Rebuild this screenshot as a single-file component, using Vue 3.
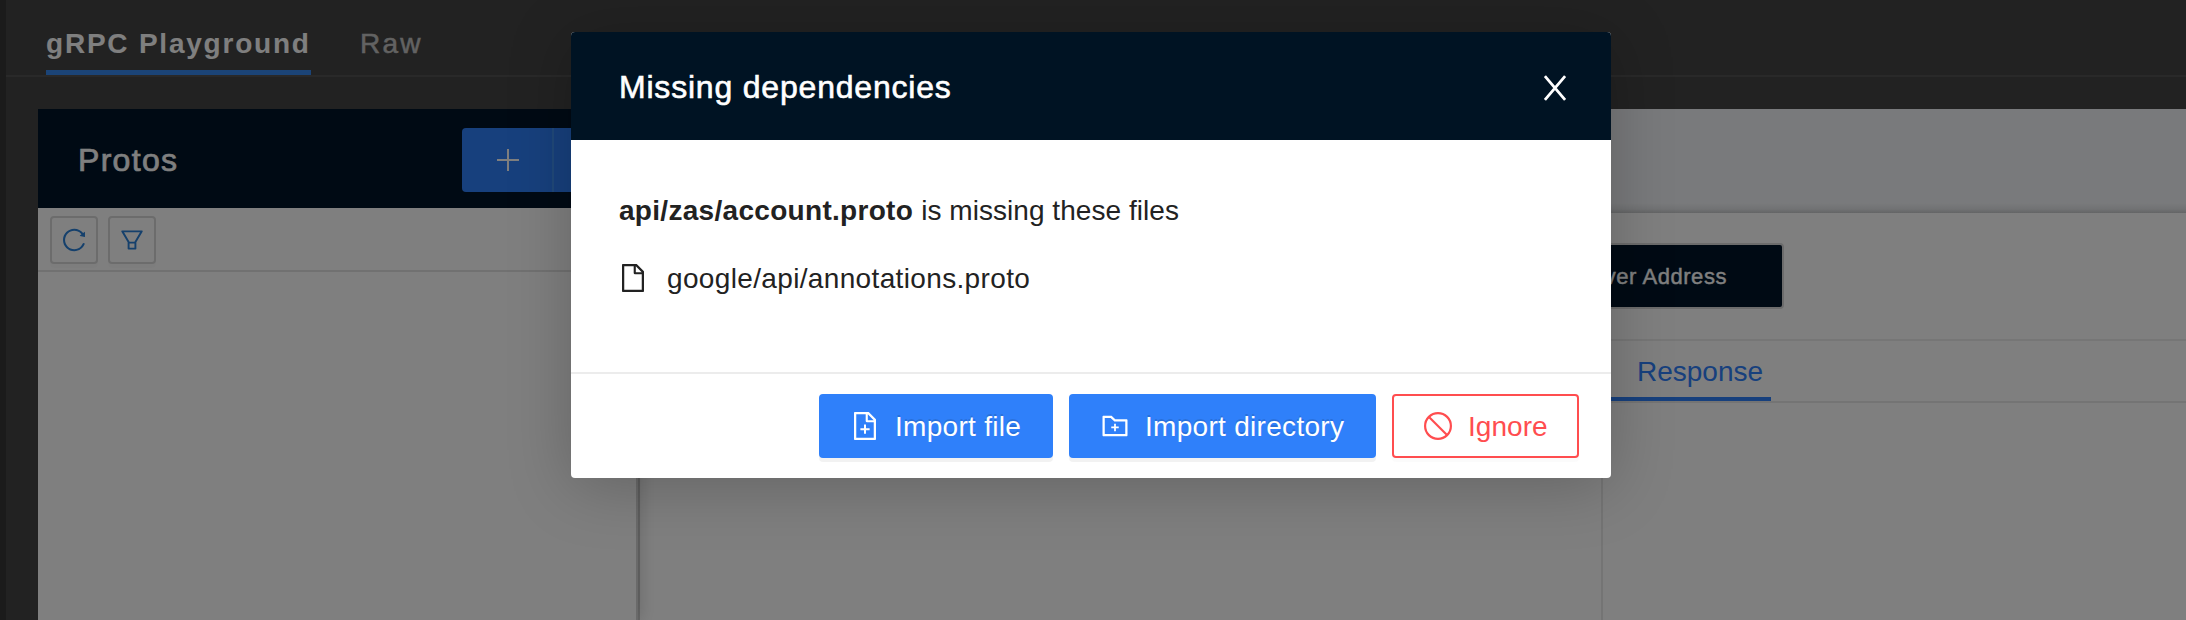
<script setup>
const icons = {
  file: 'M854.6 288.6L639.4 73.4c-6-6-14.1-9.4-22.6-9.4H192c-17.7 0-32 14.3-32 32v832c0 17.7 14.3 32 32 32h640c17.7 0 32-14.3 32-32V311.3c0-8.5-3.4-16.7-9.4-22.7zM790.2 326H602V137.8L790.2 326zm1.8 562H232V136h302v216a42 42 0 0 0 42 42h216v494z',
  cross: 'M544 472c0-4.4-3.6-8-8-8h-48c-4.4 0-8 3.6-8 8v108H372c-4.4 0-8 3.6-8 8v48c0 4.4 3.6 8 8 8h108v108c0 4.4 3.6 8 8 8h48c4.4 0 8-3.6 8-8V644h108c4.4 0 8-3.6 8-8v-48c0-4.4-3.6-8-8-8H544V472z',
  folder: 'M484 443.1V528h-84.5c-4.1 0-7.5 3.1-7.5 7v42c0 3.8 3.4 7 7.5 7H484v84.9c0 3.9 3.2 7.1 7 7.1h42c3.9 0 7-3.2 7-7.1V584h84.5c4.1 0 7.5-3.2 7.5-7v-42c0-3.9-3.4-7-7.5-7H540v-84.9c0-3.9-3.1-7.1-7-7.1h-42c-3.8 0-7 3.2-7 7.1zm396-144.7H521L403.7 186.2a8.15 8.15 0 0 0-5.5-2.2H144c-17.7 0-32 14.3-32 32v592c0 17.7 14.3 32 32 32h736c17.7 0 32-14.3 32-32V330.4c0-17.7-14.3-32-32-32zM840 768H184V256h188.5l119.6 114.4H840V768z',
  reload: 'M909.1 209.3l-56.4 44.1C775.8 155.1 656.2 92 521.9 92 290 92 102.3 279.5 102 511.5 101.7 743.7 289.8 932 521.9 932c181.3 0 335.8-115 394.6-276.1 1.5-4.2-.7-8.9-4.9-10.3l-56.7-19.5a8 8 0 0 0-10.1 4.8c-1.8 5-3.8 10-5.9 14.9-17.3 41-42.1 77.8-73.7 109.4A344.77 344.77 0 0 1 655.9 829c-42.3 17.9-87.4 27-133.8 27-46.5 0-91.5-9.1-133.8-27A341.5 341.5 0 0 1 279 755.2a342.16 342.16 0 0 1-73.7-109.4c-17.9-42.4-27-87.4-27-133.9s9.1-91.5 27-133.9c17.3-41 42.1-77.8 73.7-109.4 31.6-31.6 68.4-56.4 109.3-73.8 42.3-17.9 87.4-27 133.8-27 46.5 0 91.5 9.1 133.8 27a341.5 341.5 0 0 1 109.3 73.8c9.9 9.9 19.2 20.4 27.8 31.4l-60.2 47a8 8 0 0 0 3 14.1l175.6 43c5 1.2 9.9-2.6 9.9-7.7l.8-180.9c-.1-6.6-7.8-10.3-13-6.2z',
  filter: 'M880.1 154H143.9c-24.5 0-39.8 26.7-27.5 48L349 597.4V838c0 17.7 14.2 32 31.8 32h262.4c17.6 0 31.8-14.3 31.8-32V597.4L907.7 202c12.2-21.3-3.1-48-27.6-48zM603.4 798H420.6V642h182.9v156zm9.6-236.6l-9.5 16.6h-183l-9.5-16.6L212.7 226h598.6L613 561.4z',
}
const toolbar = ['reload', 'filter']
</script>

<template>
  <div class="screen">
    <div class="rail"></div>
    <div class="app">
      <nav class="tabs">
        <div class="tab active"><span>gRPC Playground</span></div>
        <div class="tab raw"><span>Raw</span></div>
      </nav>
      <div class="workspace">
        <aside class="sidebar">
          <header class="side-head">
            <h2>Protos</h2>
            <div class="group">
              <button class="add">
                <svg width="28" height="28" viewBox="0 0 28 28"><path d="M15 3v22M4 14h22" stroke="#fff" stroke-width="2" /></svg>
              </button>
              <button class="add"></button>
            </div>
          </header>
          <div class="side-tools">
            <button v-for="name in toolbar" :key="name" class="tool">
              <svg width="24" height="24" viewBox="64 64 896 896"><path :d="icons[name]" fill="currentColor" /></svg>
            </button>
          </div>
        </aside>
        <main class="content">
          <div class="file-tabs"></div>
          <div class="address"><div class="address-btn">Server Address</div></div>
          <div class="panes">
            <section class="pane request"><div class="pane-tabs"></div></section>
            <section class="pane">
              <div class="pane-tabs"><div class="pane-tab">Response</div></div>
            </section>
          </div>
        </main>
      </div>
    </div>

    <div class="mask">
      <div class="modal" role="dialog">
        <header class="modal-head">
          <h3>Missing dependencies</h3>
          <svg class="close" width="24" height="26" viewBox="0 0 24 26"><path d="M1.9 1.2L22.1 24.8M22.1 1.2L1.9 24.8" stroke="#fff" stroke-width="2.8" /></svg>
        </header>
        <div class="modal-body">
          <p class="message"><strong>api/zas/account.proto</strong><span>is missing these files</span></p>
          <p class="missing">
            <svg width="28" height="28" viewBox="64 64 896 896"><path :d="icons.file" fill="currentColor" /></svg>
            <span>google/api/annotations.proto</span>
          </p>
        </div>
        <footer class="modal-foot">
          <button class="btn primary file">
            <svg width="28" height="28" viewBox="64 64 896 896"><path :d="icons.file + icons.cross" fill="currentColor" /></svg>
            <span>Import file</span>
          </button>
          <button class="btn primary directory">
            <svg width="28" height="28" viewBox="64 64 896 896"><path :d="icons.folder" fill="currentColor" /></svg>
            <span>Import directory</span>
          </button>
          <button class="btn danger">
            <svg width="28" height="28" viewBox="0 0 28 28" fill="none" stroke="currentColor" stroke-width="2.2"><circle cx="14" cy="14" r="12.9" /><path d="M5 5L23 23" /></svg>
            <span>Ignore</span>
          </button>
        </footer>
      </div>
    </div>
  </div>
</template>

<style>
body {
  margin: 0;
  overflow: hidden;
}
</style>

<style scoped>
.screen,
.screen * {
  box-sizing: border-box;
}
.screen {
  position: relative;
  display: flex;
  width: 2186px;
  height: 620px;
  overflow: hidden;
  background: #444;
  font-family: "Liberation Sans", Arial, sans-serif;
  font-size: 28px;
}
h2,
h3,
p {
  margin: 0;
}
button {
  font: inherit;
  padding: 0;
  margin: 0;
}
svg {
  display: block;
  flex: none;
}
.rail {
  width: 6px;
  background: #363636;
}
.app {
  flex: 1;
  display: flex;
  flex-direction: column;
  min-width: 0;
}
.tabs {
  display: flex;
  gap: 49px;
  height: 77px;
  padding-left: 40px;
  border-bottom: 2px solid #535353;
}
.tab {
  height: 75px;
  padding-top: 28px;
  line-height: 32px;
  letter-spacing: 2.2px;
  color: #c4c4c4;
  white-space: nowrap;
}
.tab.active {
  width: 265px;
  border-bottom: 5px solid #3788ee;
  color: #fff;
  font-weight: 700;
  letter-spacing: 1.78px;
}
.tab.raw {
  -webkit-text-stroke: 0.5px;
}
.workspace {
  flex: 1;
  display: flex;
  overflow: hidden;
  margin: 32px 0 0 32px;
}
.sidebar {
  flex: none;
  width: 600px;
  background: #fff;
  border-right: 2px solid #d4d4d4;
  box-shadow: 2px 0 16px rgba(0, 0, 0, 0.18);
  z-index: 1;
}
.side-head {
  display: flex;
  align-items: center;
  justify-content: space-between;
  height: 99px;
  padding-left: 40px;
  background: #001529;
}
.side-head h2 {
  color: #fff;
  font-size: 32px;
  font-weight: 400;
  letter-spacing: 1.3px;
  line-height: 40px;
  padding-top: 3px;
  -webkit-text-stroke: 0.7px;
}
.group {
  display: flex;
  width: 174px;
  margin-top: 3px;
}
.add {
  flex: none;
  display: flex;
  align-items: center;
  justify-content: center;
  width: 92px;
  height: 64px;
  border: 0;
  border-right: 2px solid #4192f5;
  border-radius: 4px 0 0 4px;
  background: #2f80fa;
}
.add + .add {
  width: 64px;
  border-radius: 0 4px 4px 0;
}
.side-tools {
  display: flex;
  gap: 10px;
  height: 64px;
  padding: 8px 12px;
  border-bottom: 2px solid #e2e2e2;
}
.tool {
  display: flex;
  align-items: center;
  justify-content: center;
  width: 48px;
  height: 48px;
  border: 2px solid #d9d9d9;
  border-radius: 4px;
  background: #fff;
  color: #2a80d8;
  box-shadow: 0 4px 0 rgba(0, 0, 0, 0.015);
}
.content {
  flex: 1;
  display: flex;
  flex-direction: column;
  border-left: 2px solid #cfcfcf;
  background: #fff;
}
.file-tabs {
  height: 104px;
  background: linear-gradient(#f3f5f8 0 94px, #e3e5e8 100px, #c8cacc 104px);
}
.address {
  height: 128px;
  padding: 30px 402px 0 0;
  display: flex;
  justify-content: flex-end;
  align-items: flex-start;
  border-bottom: 2px solid #ececec;
}
.address-btn {
  width: 272px;
  height: 66px;
  padding-right: 55px;
  border: 2px solid #d9d9d9;
  border-radius: 4px;
  background: #001529;
  color: #fff;
  font-size: 22px;
  line-height: 64px;
  letter-spacing: 0.55px;
  text-align: right;
  white-space: nowrap;
  -webkit-text-stroke: 0.4px;
}
.panes {
  flex: 1;
  display: flex;
}
.pane {
  flex: 1;
}
.pane.request {
  flex: none;
  width: 963px;
  border-right: 2px solid #e8e8e8;
}
.pane-tabs {
  height: 62px;
  padding-left: 2px;
  border-bottom: 2px solid #e8e8e8;
}
.pane-tab {
  width: 166px;
  height: 60px;
  padding: 15px 0 0 32px;
  border-bottom: 4px solid #2f80fa;
  color: #2f80fa;
  line-height: 32px;
}
.mask {
  position: absolute;
  inset: 0;
  z-index: 2;
  background: rgba(0, 0, 0, 0.5);
}
.modal {
  width: 1040px;
  height: 446px;
  margin: 32px 0 0 571px;
  display: flex;
  flex-direction: column;
  overflow: hidden;
  border-radius: 4px;
  background: #fff;
  color: #222;
  box-shadow: 0 8px 64px rgba(0, 0, 0, 0.22);
}
.modal-head {
  display: flex;
  align-items: center;
  justify-content: space-between;
  height: 108px;
  padding: 0 44px 0 48px;
  background: #001323;
  color: #fff;
}
.modal-head h3 {
  padding-top: 2px;
  font-size: 32px;
  font-weight: 400;
  line-height: 40px;
  letter-spacing: 0.8px;
  -webkit-text-stroke: 0.6px;
}
.close {
  margin-top: 4px;
}
.modal-body {
  flex: 1;
  padding: 55px 48px 0;
}
.message {
  display: flex;
  gap: 8px;
  line-height: 32px;
  letter-spacing: 0.05px;
}
.message strong {
  letter-spacing: 0.3px;
}
.missing {
  display: flex;
  align-items: center;
  gap: 20px;
  margin-top: 31px;
  height: 32px;
  line-height: 32px;
}
.missing span {
  margin-top: 9px;
  letter-spacing: 0.35px;
}
.missing svg {
  margin-top: 8px;
}
.modal-foot {
  display: flex;
  justify-content: flex-end;
  gap: 16px;
  height: 106px;
  padding: 20px 32px 0;
  border-top: 2px solid #ececec;
}
.btn {
  display: flex;
  align-items: center;
  gap: 16px;
  height: 64px;
  padding-left: 30px;
  border: 2px solid #2f80fa;
  border-radius: 4px;
  letter-spacing: 0.3px;
  white-space: nowrap;
}
.btn span {
  padding-top: 2px;
}
.primary {
  background: #2f80fa;
  color: #fff;
  text-shadow: 0 -2px 0 rgba(0, 0, 0, 0.12);
  box-shadow: 0 4px 0 rgba(0, 0, 0, 0.05);
}
.file {
  width: 234px;
}
.directory {
  width: 307px;
}
.danger {
  width: 187px;
  background: #fff;
  border-color: #ff4d4f;
  color: #ff4d4f;
  letter-spacing: 0.05px;
  box-shadow: 0 4px 0 rgba(0, 0, 0, 0.015);
}
</style>
